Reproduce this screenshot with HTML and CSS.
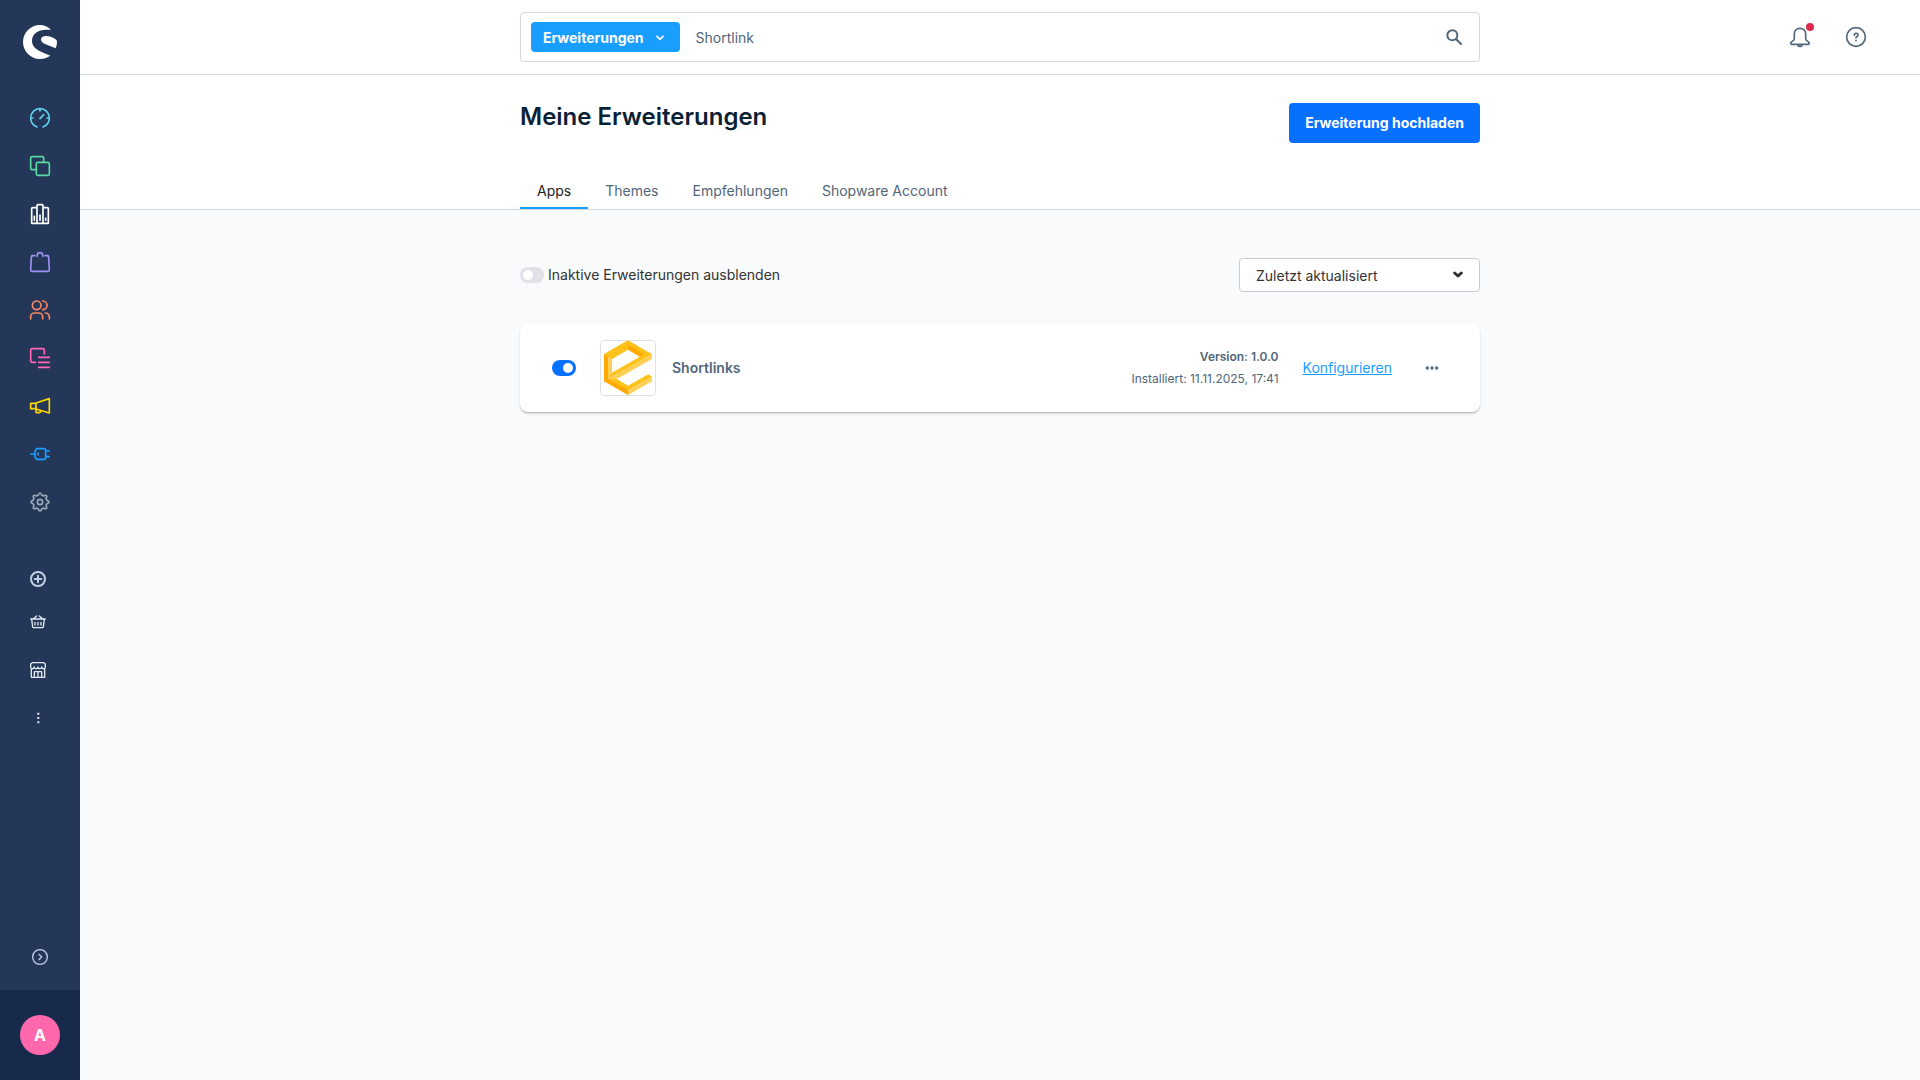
FILE: index.html
```
<!DOCTYPE html>
<html lang="de">
<head>
    <meta charset="UTF-8">
    <meta name="viewport" content="width=device-width, initial-scale=1.0">
    <title>Meine Erweiterungen</title>
    <link rel="stylesheet" href="styles.css">
</head>
<body>
    <aside class="sidebar">
        <a class="brand" href="#" aria-label="Administration">
            <svg viewBox="0 0 102 102">
                <path d="M84 14C75 5 63 0 51 0 23 0 0 23 0 51s23 51 51 51c11 0 22-4 31-10L54 80C37 72 27 62 27 47c0-20 18-33 42-33z"/>
                <path d="M98 70 66 57c-8-3-12-8-12-14 0-7 8-11 17-10 13 1 24 7 30 13 2 7 0 16-3 24z"/>
            </svg>
        </a>
        <nav class="nav">
            <a class="cyan" href="#" aria-label="Dashboard">
                <svg viewBox="0 0 60 60"><path d="M21 57C9 52 2 42 2 30a28 28 0 0 1 56 0c0 12-7 22-19 27M2 30h7M51 30h7M30 2v7M30 32l11-12"/></svg>
            </a>
            <a class="green" href="#" aria-label="Kataloge">
                <svg viewBox="0 0 60 60"><path d="M19 41H6a4 4 0 0 1-4-4V6a4 4 0 0 1 4-4h31a4 4 0 0 1 4 4v13"/><rect x="19" y="19" width="39" height="39" rx="4"/></svg>
            </a>
            <a class="white" href="#" aria-label="Bestellungen">
                <svg viewBox="0 0 60 60"><path d="M21 11H8a3 3 0 0 0-3 3v44h50V14a3 3 0 0 0-3-3H39M21 58V5a3 3 0 0 1 3-3h12a3 3 0 0 1 3 3v53M13 37v12M30 33v16M47 43v6"/></svg>
            </a>
            <a class="purple" href="#" aria-label="Produkte">
                <svg viewBox="0 0 60 60"><path d="M15 11H8a4 4 0 0 0-4 4L2 54a4 4 0 0 0 4 4h48a4 4 0 0 0 4-4l-2-39a4 4 0 0 0-4-4h-7M22 13V9c0-4 3-7 8-7s8 3 8 7v4"/></svg>
            </a>
            <a class="orange" href="#" aria-label="Kunden">
                <svg viewBox="0 0 60 60"><circle cx="20" cy="16" r="13"/><path d="M2 57v-7a11 11 0 0 1 11-11h14a11 11 0 0 1 11 11v7M38 3a13 13 0 0 1 0 26M46 39a12 12 0 0 1 12 12v6"/></svg>
            </a>
            <a class="pink" href="#" aria-label="Inhalte">
                <svg viewBox="0 0 60 60"><path d="M17 43H6a4 4 0 0 1-4-4V6a4 4 0 0 1 4-4h33a4 4 0 0 1 4 4v12M26 28h32M26 43h32M26 58h32"/></svg>
            </a>
            <a class="yellow" href="#" aria-label="Marketing">
                <svg viewBox="0 0 60 60"><path d="M18 22H2v16h16zM18 21 58 8v43L18 39M18 40v7a3 3 0 0 0 3 3h6c3 0 5-3 5-7"/></svg>
            </a>
            <a class="blue" href="#" aria-label="Erweiterungen">
                <svg viewBox="0 0 60 60"><path d="M2 30h13M20 14h22a5 5 0 0 1 5 5v22a5 5 0 0 1-5 5H20l-5-7V21zM47 21h11M47 38h11M24 27v6"/></svg>
            </a>
            <a class="grey" href="#" aria-label="Einstellungen">
                <svg viewBox="0 0 60 60"><path d="M25 9c2-8 8-8 10 0l6 3c7-5 12 0 7 7l3 6c8 2 8 8 0 10l-3 6c5 7 0 12-7 7l-6 3c-2 8-8 8-10 0l-6-3c-7 5-12 0-7-7l-3-6c-8-2-8-8 0-10l3-6c-5-7 0-12 7-7z"/><circle cx="30" cy="30" r="8"/></svg>
            </a>
        </nav>
        <nav class="nav nav-shops">
            <a class="nav-add" href="#" aria-label="Verkaufskanal hinzufügen">
                <svg viewBox="0 0 48 48"><circle cx="24" cy="24" r="21"/><path d="M24 14v20M14 24h20"/></svg>
            </a>
            <a href="#" aria-label="Headless">
                <svg viewBox="0 0 48 48"><path d="M2 15h44M5 15l3 24a3 3 0 0 0 3 2h26a3 3 0 0 0 3-2l3-24M12 13l8-7M36 13l-8-7M15 25v8M24 25v8M33 25v8"/></svg>
            </a>
            <a href="#" aria-label="Storefront">
                <svg viewBox="0 0 48 48"><path d="M4 20v26h40V20M7 2h34l5 4v9c0 7-9 7-11 0-1 7-11 7-11 0 0 7-10 7-11 0-2 7-11 7-11 0V6zM13 46V29h22v17M24 29v17"/></svg>
            </a>
            <a href="#" aria-label="Mehr">
                <svg class="filled" viewBox="0 0 48 48"><path d="M22 8h6v6h-6zM22 21h6v6h-6zM22 34h6v6h-6z"/></svg>
            </a>
        </nav>
        <button class="expand" type="button" aria-label="Menü ausklappen">
            <svg viewBox="0 0 48 48"><circle cx="24" cy="24" r="22"/><path d="M21 16l8 8-8 8"/></svg>
        </button>
        <div class="user"><button class="avatar" type="button">A</button></div>
    </aside>

    <div class="page">
        <header class="topbar">
            <form class="search">
                <button class="search-type" type="button">
                    Erweiterungen
                    <svg viewBox="0 0 24 24"><path d="M3 7l9 9 9-9"/></svg>
                </button>
                <input type="text" value="Shortlink" aria-label="Suche">
                <button class="search-submit" type="submit" aria-label="Suchen">
                    <svg viewBox="0 0 48 48"><circle cx="19" cy="19" r="15"/><path d="M30 30l15 15"/></svg>
                </button>
            </form>
            <div class="actions">
                <button class="bell" type="button" aria-label="Benachrichtigungen">
                    <svg viewBox="0 0 60 60"><path d="M30 4c-10 0-17 7-17 16v15c0 8-11 8-11 14 0 2 1 3 3 3h50c2 0 3-1 3-3 0-6-11-6-11-14V20C47 11 40 4 30 4zM24 53c0 7 12 7 12 0"/></svg>
                    <span class="dot"></span>
                </button>
                <button type="button" aria-label="Hilfe">
                    <svg viewBox="0 0 60 60"><circle cx="30" cy="30" r="28"/><path d="M25 25c0-8 11-8 11-1 0 5-6 4-6 9M30 40v1"/></svg>
                </button>
            </div>
        </header>

        <section class="page-head">
            <div class="container">
                <div class="title-row">
                    <h1>Meine Erweiterungen</h1>
                    <button class="upload" type="button">Erweiterung hochladen</button>
                </div>
                <nav class="tabs">
                    <a class="active" href="#">Apps</a>
                    <a href="#">Themes</a>
                    <a href="#">Empfehlungen</a>
                    <a href="#">Shopware Account</a>
                </nav>
            </div>
        </section>

        <main class="container content">
            <div class="filters">
                <label class="hide-inactive"><input class="switch" type="checkbox">Inaktive Erweiterungen ausblenden</label>
                <div class="sort">
                    <select aria-label="Sortierung">
                        <option>Zuletzt aktualisiert</option>
                        <option>Name aufsteigend</option>
                        <option>Name absteigend</option>
                    </select>
                    <svg viewBox="0 0 30 30"><path d="M5 9l10 9 10-9"/></svg>
                </div>
            </div>

            <article class="card">
                <input class="switch" type="checkbox" checked aria-label="Shortlinks aktiv">
                <div class="app-icon">
                    <svg viewBox="0 0 168 168">
                        <path fill="#ffc21a" d="M84 1 156 43 40 110 84 137 145 103 156 110 84 152 24 118V50H12V43z"/>
                        <path fill="#ffcf57" d="M24 50 36 57V97L28 113 156 43V57L60 112 50 116 24 118z"/>
                        <path fill="#ffcf57" d="M156 110V124L84 165V152z"/>
                        <path fill="#ffa800" d="M12 43 24 50V116L84 150V165L12 124z"/>
                        <path fill="#ffa800" d="M84 15 132 43 119 51 84 30z"/>
                        <path fill="#ffc21a" d="M12 43 84 1V15L24 50z"/>
                        <path fill="#fff" d="M36 57 84 29 119 50 36 98z"/>
                    </svg>
                </div>
                <h2>Shortlinks</h2>
                <div class="meta">
                    <strong>Version: 1.0.0</strong>
                    <span>Installiert: 11.11.2025, 17:41</span>
                </div>
                <a class="configure" href="#">Konfigurieren</a>
                <button class="more" type="button" aria-label="Weitere Aktionen">
                    <svg viewBox="0 0 48 48"><circle cx="10" cy="24" r="5"/><circle cx="24" cy="24" r="5"/><circle cx="38" cy="24" r="5"/></svg>
                </button>
            </article>
        </main>
    </div>
</body>
</html>
```
FILE: styles.css
```
* {
    margin: 0;
    padding: 0;
    box-sizing: border-box;
}

body {
    display: flex;
    min-height: 100vh;
    background: #f9fafb;
    color: #52667a;
    font-family: Inter, sans-serif;
    font-size: 14px;
    line-height: 20px;
}

button,
input,
select {
    font: inherit;
    color: inherit;
    border: none;
    background: none;
}

button {
    cursor: pointer;
}

a {
    color: inherit;
    text-decoration: none;
}

svg {
    display: block;
    fill: none;
    stroke: currentColor;
    stroke-width: 4;
    stroke-linecap: round;
    stroke-linejoin: round;
}

/* Sidebar */
.sidebar {
    display: flex;
    flex-direction: column;
    flex-shrink: 0;
    width: 80px;
    height: 100vh;
    position: sticky;
    top: 0;
    background: #243758;
}

.brand {
    padding: 25px 23px 35px;
    color: #fff;
}

.brand svg {
    width: 34px;
    height: 34px;
    fill: currentColor;
    stroke: none;
}

.nav a {
    display: flex;
    align-items: center;
    height: 48px;
    padding-left: 30px;
}

.nav svg {
    width: 20px;
    height: 20px;
    stroke-width: 5;
    overflow: visible;
}

.cyan { color: #5fd0ea; }
.green { color: #57d9a3; }
.white { color: #fff; }
.purple { color: #a092f0; }
.orange { color: #f88962; }
.pink { color: #ff68b4; }
.yellow { color: #ffd700; }
.blue { color: #189eff; }
.grey { color: #9aa8b5; }

.nav-shops {
    margin-top: 34px;
    color: #e3e9f2;
}

.nav-shops svg {
    width: 16px;
    height: 16px;
    stroke-width: 4;
}

.nav-shops .nav-add {
    height: 38px;
    color: #c3d0e4;
}

.nav-add svg {
    stroke-width: 6;
}

.nav-shops .filled {
    fill: currentColor;
    stroke: none;
}

.expand {
    margin-top: auto;
    padding: 16px 32px 25px;
    color: #c3d0e4;
}

.expand svg {
    width: 16px;
    height: 16px;
}

.user {
    display: flex;
    justify-content: center;
    align-items: center;
    height: 90px;
    background: #182a4c;
}

.avatar {
    width: 40px;
    height: 40px;
    border-radius: 50%;
    background: #ff68ac;
    color: #fff;
    font-size: 16px;
    font-weight: 700;
}

/* Top bar */
.page {
    flex: 1;
    min-width: 0;
}

.topbar {
    display: grid;
    grid-template-columns: 1fr minmax(0, 960px) 1fr;
    align-items: center;
    height: 75px;
    background: #fff;
    border-bottom: 1px solid #d1d9e0;
}

.search {
    grid-column: 2;
    display: flex;
    align-items: center;
    height: 50px;
    padding: 0 17px 0 10px;
    border: 1px solid #d1d9e0;
    border-radius: 4px;
}

.search-type {
    display: flex;
    align-items: center;
    gap: 12px;
    height: 30px;
    padding: 2px 16px 0 12px;
    border-radius: 4px;
    background: #189eff;
    color: #fff;
    font-weight: 700;
}

.search-type svg {
    width: 8px;
    height: 8px;
    stroke-width: 5;
}

.search input {
    flex: 1;
    min-width: 0;
    padding: 2px 16px 0;
    outline: none;
}

.search-submit svg {
    width: 16px;
    height: 16px;
    stroke-width: 6;
}

.actions {
    display: flex;
    justify-content: flex-end;
    gap: 36px;
    padding-right: 54px;
}

.actions svg {
    width: 20px;
    height: 20px;
    stroke-width: 5;
    overflow: visible;
}

.bell {
    position: relative;
}

.dot {
    position: absolute;
    top: -4px;
    right: -4px;
    width: 8px;
    height: 8px;
    border-radius: 50%;
    background: #de294c;
}

/* Page head */
.container {
    width: 100%;
    max-width: 960px;
    margin: 0 auto;
}

.page-head {
    background: #fff;
    border-bottom: 1px solid #d1d9e0;
}

.title-row {
    display: flex;
    justify-content: space-between;
    align-items: flex-start;
    padding: 28px 0 30px;
}

h1 {
    color: #0b1f35;
    font-size: 24px;
    font-weight: 600;
    line-height: 28px;
}

.upload {
    height: 40px;
    padding: 0 16px;
    border-radius: 4px;
    background: #0870ff;
    color: #fff;
    font-weight: 700;
}

.tabs {
    display: flex;
}

.tabs a {
    padding: 8px 17px 6px;
    border-bottom: 2px solid transparent;
}

.tabs .active {
    border-color: #189eff;
    color: #1c1c1c;
}

/* Content */
.content {
    padding-top: 48px;
}

.filters {
    display: flex;
    justify-content: space-between;
    align-items: center;
    margin-bottom: 32px;
    color: #333;
}

.hide-inactive {
    display: flex;
    align-items: center;
    gap: 4px;
}

.switch {
    appearance: none;
    flex-shrink: 0;
    width: 24px;
    height: 16px;
    padding: 3px;
    border-radius: 8px;
    background: #e0e2e8;
}

.switch::before {
    content: '';
    display: block;
    width: 10px;
    height: 10px;
    border-radius: 50%;
    background: #fff;
}

.switch:checked {
    background: #0870ff;
}

.switch:checked::before {
    margin-left: auto;
}

.sort {
    position: relative;
    width: 241px;
}

.sort select {
    appearance: none;
    width: 100%;
    height: 34px;
    padding: 2px 40px 0 16px;
    border: 1px solid #c8ccd4;
    border-radius: 4px;
    background: #fff;
}

.sort svg {
    position: absolute;
    top: 12px;
    right: 17px;
    width: 10px;
    height: 10px;
    stroke-width: 9;
    pointer-events: none;
}

.card {
    display: flex;
    align-items: center;
    padding: 16px 40px 16px 32px;
    border-radius: 8px;
    background: #fff;
    box-shadow: 0 1px 1px rgba(0, 0, 0, 0.16), 0 2px 2px rgba(0, 0, 0, 0.12);
}

.app-icon {
    width: 56px;
    height: 56px;
    margin: 0 16px 0 24px;
    border: 1px solid #dfe3e8;
    border-radius: 4px;
}

.app-icon svg {
    width: 56px;
    height: 56px;
    margin: -1px;
    stroke: none;
}

.card h2 {
    flex: 1;
    font-size: 14px;
    font-weight: 600;
}

.meta {
    display: flex;
    flex-direction: column;
    gap: 2px;
    font-size: 12px;
    text-align: right;
}

.meta strong {
    font-weight: 600;
}

.configure {
    margin: 0 32px 0 24px;
    color: #189eff;
    text-decoration: underline;
}

.more svg {
    width: 16px;
    height: 16px;
    fill: currentColor;
    stroke: none;
}
```
